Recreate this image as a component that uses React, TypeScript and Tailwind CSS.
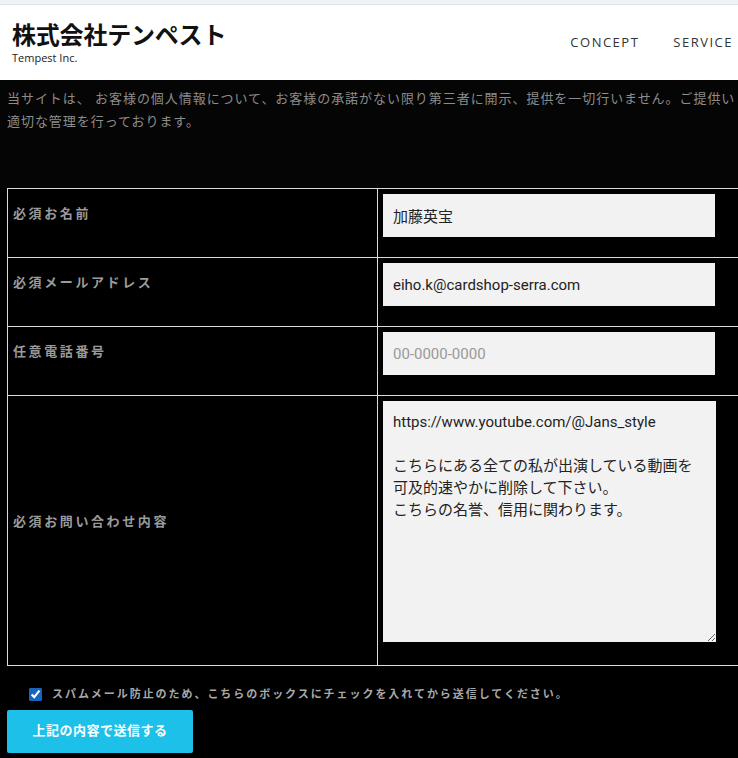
import React from "react";

const jp = { fontFamily: '"Noto Sans", "Noto Sans CJK JP", sans-serif' };

const labelCls =
  "w-[370px] shrink-0 border-r border-[#dcdcdc] flex items-center pl-[5px] pb-[18px] text-[13px] font-bold tracking-[2.6px] text-[#9a9a9a]";

function Row({ label, children }: { label: string; children: React.ReactNode }) {
  return (
    <div className="flex border-b border-[#dcdcdc]">
      <div className={labelCls}>{label}</div>
      <div className="flex-1 pl-[5px] pt-[5px]">{children}</div>
    </div>
  );
}

const inputCls =
  "block w-[332px] h-[43px] bg-[#f2f2f2] pl-[10px] text-[15px] text-[#222] outline-none placeholder:text-[#999]";

const roboto = { fontFamily: 'Roboto, "Noto Sans CJK JP", sans-serif' };

export default function App() {
  return (
    <div className="w-[738px] h-[758px] overflow-hidden bg-black" style={jp}>
      <div className="h-[5px] bg-[#eef3f7] border-b border-[#dbe4ea]" />
      <header className="h-[75px] bg-white flex items-start justify-between">
        <div className="pl-[12px] pt-[15px]">
          <div className="text-[24px] font-bold leading-[29px] text-[#111] tracking-[-0.2px]">
            株式会社テンペスト
          </div>
          <div className="mt-[2px] text-[11px] leading-[13px] text-[#222]" style={{ fontFamily: '"Open Sans", sans-serif' }}>
            Tempest Inc.
          </div>
        </div>
        <nav
          className="flex gap-[34px] pt-[28px] pr-[5px] text-[13px] tracking-[1.5px] text-[#333] whitespace-nowrap"
          style={{ fontFamily: '"Open Sans", sans-serif' }}
        >
          <span>CONCEPT</span>
          <span>SERVICE</span>
        </nav>
      </header>
      <div className="bg-[#050505] pl-[7px] pt-[7px] h-[108px] text-[13px] leading-[23px] tracking-[0.95px] text-[#8c8c8c] overflow-hidden">
        <div className="w-[731px] overflow-hidden whitespace-nowrap">
          当サイトは、 お客様の個人情報について、お客様の承諾がない限り第三者に開示、提供を一切行いません。ご提供い
        </div>
        <div className="whitespace-nowrap">適切な管理を行っております。</div>
      </div>
      <div className="pl-[7px]">
        <div className="w-[760px] border-t border-l border-[#dcdcdc]">
          <Row label="必須お名前">
            <div className="pb-[20px]">
              <input readOnly className={inputCls} defaultValue="加藤英宝" style={roboto} />
            </div>
          </Row>
          <Row label="必須メールアドレス">
            <div className="pb-[20px]">
              <input readOnly className={inputCls} defaultValue="eiho.k@cardshop-serra.com" style={roboto} />
            </div>
          </Row>
          <Row label="任意電話番号">
            <div className="pb-[20px]">
              <input readOnly className={inputCls} placeholder="00-0000-0000" style={roboto} />
            </div>
          </Row>
          <Row label="必須お問い合わせ内容">
            <div className="pb-[23px]">
              <textarea
                readOnly
                className="block w-[333px] h-[241px] bg-[#f2f2f2] pl-[10px] pt-[10px] text-[15px] leading-[22px] text-[#222] outline-none"
                style={roboto}
                defaultValue={
                  "https://www.youtube.com/@Jans_style\n\nこちらにある全ての私が出演している動画を\n可及的速やかに削除して下さい。\nこちらの名誉、信用に関わります。"
                }
              />
            </div>
          </Row>
        </div>
        <label className="flex items-center mt-[20px] pl-[22px] gap-[10px] whitespace-nowrap">
          <input type="checkbox" defaultChecked className="w-[13px] h-[13px] m-0 accent-[#1565c0]" />
          <span className="text-[11px] font-bold tracking-[1.95px] text-[#a8a8a8]">
            スパムメール防止のため、こちらのボックスにチェックを入れてから送信してください。
          </span>
        </label>
        <button className="mt-[7px] w-[186px] h-[43px] rounded-[2px] bg-[#1dc0e8] text-white text-[13px] font-bold tracking-[0.5px] flex items-center justify-center">
          上記の内容で送信する
        </button>
      </div>
    </div>
  );
}
